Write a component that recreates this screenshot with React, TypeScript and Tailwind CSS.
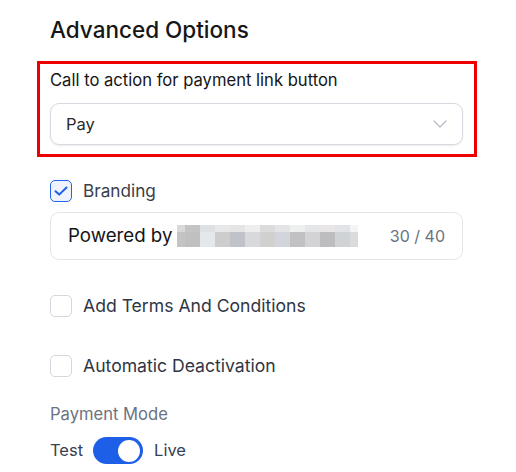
import React from "react";

const row1 = ["#d9d9d9","#c4c4c4","#dde1e4","#e6e8ea","#e5e5e5","#eceef0","#dcdcdd","#e4e4e6","#eef0ef","#e5e6e8","#e8e6e7","#e0e3e8","#f3f4f5"];
const row2 = ["#c4c4c4","#c0c0c0","#e3e8ea","#cdcdcd","#bfc2c8","#d7d9dc","#d0d0d0","#d2d5db","#c1c1c3","#d3d3d5","#bdbdc0","#cfd3d6","#dbdbdd"];
const widths = [8,15,15,15,15,15,15,15,15,15,15,15,8];

function Blur() {
  return (
    <div className="flex flex-col ml-[5px]">
      <div className="flex h-[7px]">
        {row1.map((c, i) => (
          <div key={i} style={{ background: c, width: widths[i] }} />
        ))}
      </div>
      <div className="flex h-[15px]">
        {row2.map((c, i) => (
          <div key={i} style={{ background: c, width: widths[i] }} />
        ))}
      </div>
    </div>
  );
}

function Box({ checked }: { checked?: boolean }) {
  return checked ? (
    <div className="w-[22px] h-[22px] rounded-[5px] border-[1.5px] border-[#2563eb] bg-[#eef3fe] flex items-center justify-center">
      <svg width="14" height="10" viewBox="0 0 14 10" fill="none">
        <path d="M1.5 5.2 L5.2 8.6 L12.5 1.5" stroke="#1d5fe6" strokeWidth="2" strokeLinecap="round" strokeLinejoin="round" />
      </svg>
    </div>
  ) : (
    <div className="w-[22px] h-[22px] rounded-[5px] border border-[#d4d7de] bg-white" />
  );
}

export default function App() {
  return (
    <div className="w-[516px] h-[472px] bg-white pl-[50px] pr-[53px] font-['Inter',sans-serif] overflow-hidden">
      <div className="pt-[16px] h-[44px] text-[22.5px] leading-[28px] font-medium text-[#161616]">Advanced Options</div>
      <div className="mt-[17px] -ml-[13px] -mr-[14px] border-[3px] border-[#ee0000] pl-[10px] pr-[11px] pt-[4px] pb-[9px]">
        <div className="text-[16.6px] leading-[24px] text-[#151515]">Call to action for payment link button</div>
        <div className="mt-[11px] h-[42px] rounded-[9px] border border-[#d6d9e0] shadow-[0_1px_2px_rgba(0,0,0,0.08)] flex items-center pl-[15px] pr-[15px] justify-between">
          <span className="text-[16.5px] text-[#2a2a2a]">Pay</span>
          <svg width="14" height="8" viewBox="0 0 14 8" fill="none">
            <path d="M1 1 L7 7 L13 1" stroke="#b8bcc4" strokeWidth="1.3" strokeLinecap="round" strokeLinejoin="round" />
          </svg>
        </div>
      </div>
      <div className="mt-[22px] flex items-center gap-[11px] h-[23px]">
        <Box checked />
        <span className="text-[17.2px] text-[#3a3f4b]">Branding</span>
      </div>
      <div className="mt-[10px] h-[48px] rounded-[9px] border border-[#e3e5ea] flex items-center pl-[17px] pr-[17px]">
        <span className="text-[18.7px] text-[#151515]">Powered by</span>
        <Blur />
        <span className="ml-auto text-[16px] text-[#6b7280]">30 / 40</span>
      </div>
      <div className="mt-[35px] flex items-center gap-[11px] h-[22px]">
        <Box />
        <span className="text-[17.6px] text-[#2f3544]">Add Terms And Conditions</span>
      </div>
      <div className="mt-[38px] flex items-center gap-[11px] h-[22px]">
        <Box />
        <span className="text-[17.6px] text-[#2f3544]">Automatic Deactivation</span>
      </div>
      <div className="mt-[25px] text-[16.6px] leading-[24px] text-[#6b7280]">Payment Mode</div>
      <div className="mt-[11px] flex items-center h-[27px]">
        <span className="text-[16.5px] text-[#374151]">Test</span>
        <div className="ml-[10px] w-[50px] h-[27px] rounded-full bg-[#1d5fe6] flex items-center justify-end pr-[3px]">
          <div className="w-[22px] h-[22px] rounded-full bg-white" />
        </div>
        <span className="ml-[11px] text-[16.5px] text-[#374151]">Live</span>
      </div>
    </div>
  );
}
